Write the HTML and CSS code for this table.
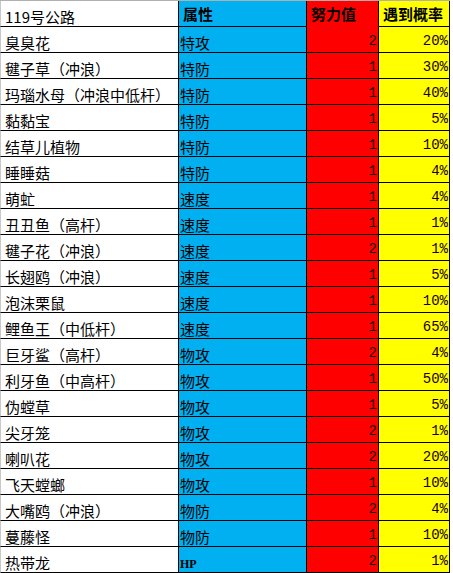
FILE: index.html
```html
<!DOCTYPE html>
<html lang="zh">
<head>
<meta charset="utf-8">
<title>119号公路</title>
<link rel="stylesheet" href="styles.css">
</head>
<body>
<div class="sheet">
  <div class="c name">119号公路</div>
  <div class="c attr head">属性</div>
  <div class="c ev head nob">努力值</div>
  <div class="c rate head">遇到概率</div>

  <div class="c name">臭臭花</div><div class="c attr">特攻</div><div class="c ev num">2</div><div class="c rate num">20%</div>
  <div class="c name">毽子草（冲浪）</div><div class="c attr">特防</div><div class="c ev num">1</div><div class="c rate num">30%</div>
  <div class="c name">玛瑙水母（冲浪中低杆）</div><div class="c attr">特防</div><div class="c ev num">1</div><div class="c rate num">40%</div>
  <div class="c name">黏黏宝</div><div class="c attr">特防</div><div class="c ev num">1</div><div class="c rate num">5%</div>
  <div class="c name">结草儿植物</div><div class="c attr">特防</div><div class="c ev num">1</div><div class="c rate num">10%</div>
  <div class="c name">睡睡菇</div><div class="c attr">特防</div><div class="c ev num">1</div><div class="c rate num">4%</div>
  <div class="c name">萌虻</div><div class="c attr">速度</div><div class="c ev num">1</div><div class="c rate num">4%</div>
  <div class="c name">丑丑鱼（高杆）</div><div class="c attr">速度</div><div class="c ev num">1</div><div class="c rate num">1%</div>
  <div class="c name">毽子花（冲浪）</div><div class="c attr">速度</div><div class="c ev num">2</div><div class="c rate num">1%</div>
  <div class="c name">长翅鸥（冲浪）</div><div class="c attr">速度</div><div class="c ev num">1</div><div class="c rate num">5%</div>
  <div class="c name">泡沫栗鼠</div><div class="c attr">速度</div><div class="c ev num">1</div><div class="c rate num">10%</div>
  <div class="c name">鲤鱼王（中低杆）</div><div class="c attr">速度</div><div class="c ev num">1</div><div class="c rate num">65%</div>
  <div class="c name">巨牙鲨（高杆）</div><div class="c attr">物攻</div><div class="c ev num">2</div><div class="c rate num">4%</div>
  <div class="c name">利牙鱼（中高杆）</div><div class="c attr">物攻</div><div class="c ev num">1</div><div class="c rate num">50%</div>
  <div class="c name">伪螳草</div><div class="c attr">物攻</div><div class="c ev num">1</div><div class="c rate num">5%</div>
  <div class="c name">尖牙笼</div><div class="c attr">物攻</div><div class="c ev num">2</div><div class="c rate num">1%</div>
  <div class="c name">喇叭花</div><div class="c attr">物攻</div><div class="c ev num">2</div><div class="c rate num">20%</div>
  <div class="c name">飞天螳螂</div><div class="c attr">物攻</div><div class="c ev num">1</div><div class="c rate num">10%</div>
  <div class="c name">大嘴鸥（冲浪）</div><div class="c attr">物防</div><div class="c ev num">2</div><div class="c rate num">4%</div>
  <div class="c name">蔓藤怪</div><div class="c attr">物防</div><div class="c ev num">1</div><div class="c rate num">10%</div>
  <div class="c name">热带龙</div><div class="c attr"><span class="latin">HP</span></div><div class="c ev num">2</div><div class="c rate num">1%</div>
</div>
</body>
</html>
```

FILE: styles.css
```css
html, body {
  margin: 0;
  padding: 0;
  background: #ffffff;
}

.sheet {
  display: grid;
  grid-template-columns: 179px 128px 72px 71px;
  grid-auto-rows: 26px;
  width: 450px;
  border-top: 1px solid #b0b0b0;
  font-family: "Noto Sans CJK SC", "Noto Sans", sans-serif;
  font-size: 15px;
  color: #000;
}

.c {
  box-sizing: border-box;
  display: flex;
  align-items: flex-end;
  border-right: 1px solid #000;
  border-bottom: 1px solid #000;
  line-height: 18px;
  white-space: nowrap;
  overflow: hidden;
}

.name {
  background: #ffffff;
  border-left: 1px solid #c8c8c8;
  padding-left: 4px;
}

.attr {
  background: #00b0f0;
  padding-left: 1px;
}

.ev {
  background: #ff0000;
}

.rate {
  background: #ffff00;
}

.head {
  font-weight: 700;
  align-items: center;
  padding-left: 4px;
}

.nob {
  border-bottom-color: #ff0000;
}

.num {
  justify-content: flex-end;
  padding-right: 1px;
  font-family: "Liberation Mono", monospace;
  font-size: 14px;
  line-height: 16px;
  padding-bottom: 3px;
  color: #1a0000;
}

.latin {
  font-family: "Liberation Serif", serif;
  font-size: 12px;
  font-weight: 700;
  line-height: 14px;
  padding-bottom: 1px;
}
```
